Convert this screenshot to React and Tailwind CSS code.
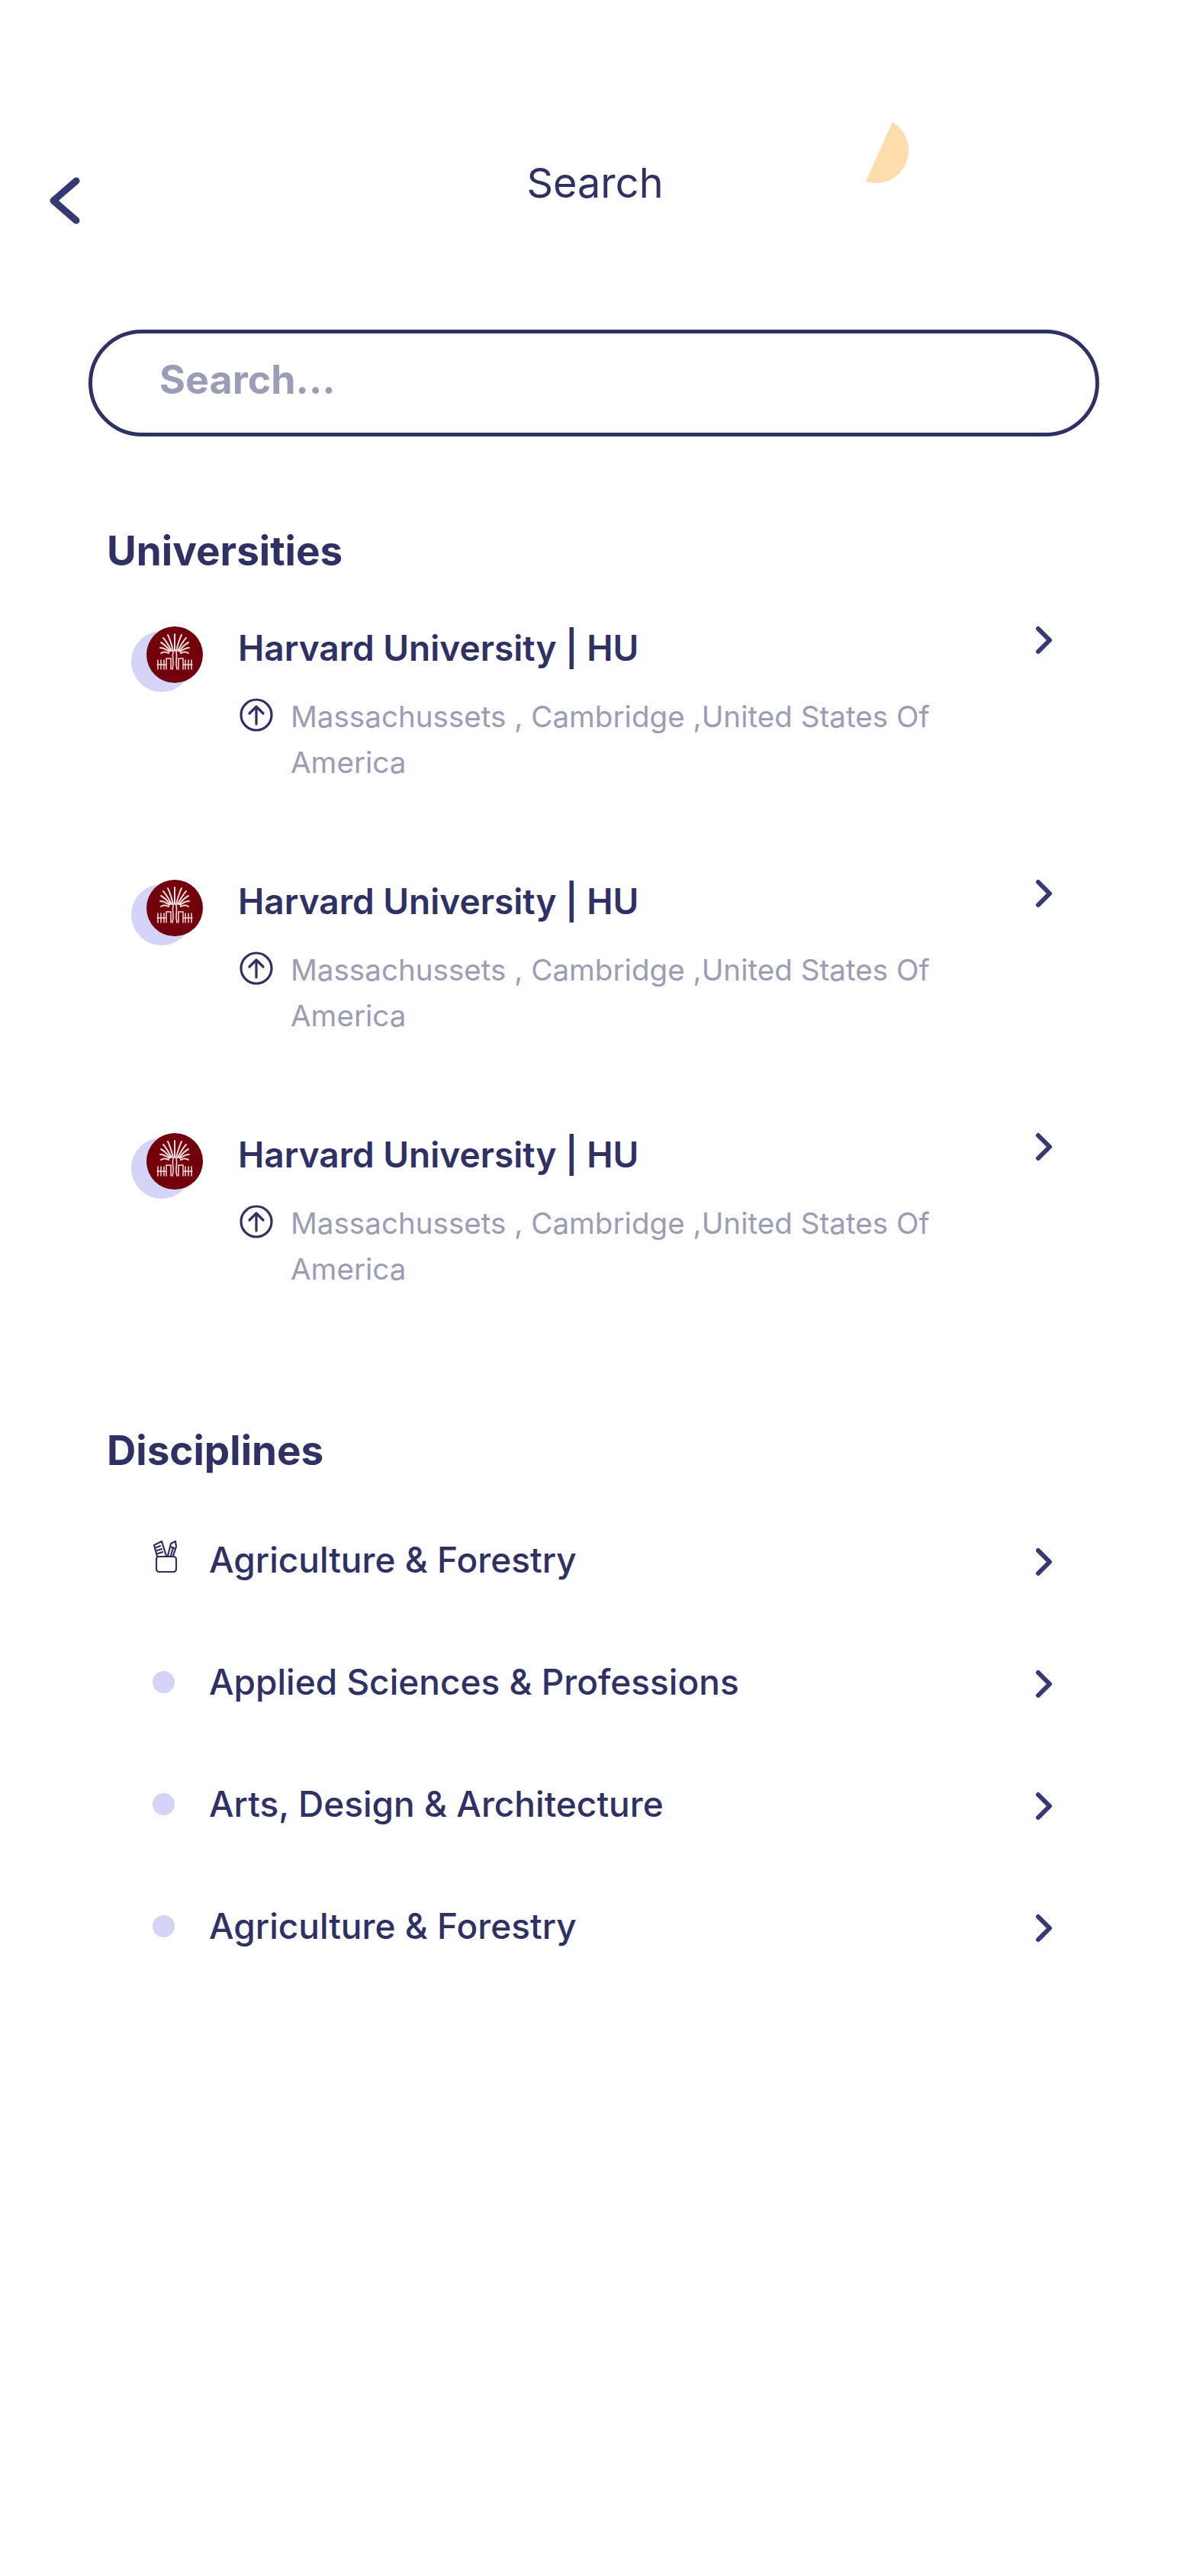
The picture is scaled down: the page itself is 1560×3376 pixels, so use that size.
const universities = [1, 2, 3];
const disciplines = [
  "Agriculture & Forestry",
  "Applied Sciences & Professions",
  "Arts, Design & Architecture",
  "Agriculture & Forestry",
];

const Chevron = ({ className }) => (
  <svg className={className} viewBox="0 0 28 38" fill="none" stroke="#363a72" strokeWidth="6" strokeLinecap="round" strokeLinejoin="round">
    <path d="M5 4l15 15L5 34" />
  </svg>
);

const Logo = () => (
  <div className="relative h-[88px] w-[100px] shrink-0">
    <div className="absolute left-0 top-[6px] h-20 w-20 rounded-full bg-[#d3d4f8]" />
    <svg className="absolute left-[20px] top-0 h-[74px] w-[74px]" viewBox="0 0 74 74">
      <circle cx="37" cy="37" r="37" fill="#71000c" />
      <g fill="none" stroke="#f0dcd8" strokeWidth="2" strokeLinecap="round">
        <path d="M37 32C37 24 37 16 37 10M35 32C33 24 31 17 28 11M39 32C41 24 43 17 46 11M33 32C29 25 26 19 22 15M41 32C45 25 48 19 52 15M31 32C27 27 23 23 19 21M43 32C47 27 51 23 55 21M30 33C26 30 22 28 18 28M44 33C48 30 52 28 56 28M29 35C25 33 22 33 19 35M45 35C49 33 52 33 55 35" />
        <path d="M35 33C33 42 37 46 34 56M39 33C41 42 37 46 40 56" strokeWidth="1.6" />
        <path d="M14 50H26M48 50H60M15 44V56M19 44V56M23 44V56M51 44V56M55 44V56M59 44V56M26 56V42H32V56M42 56V42H48V56" strokeWidth="1.5" />
      </g>
    </svg>
  </div>
);

const PinIcon = () => (
  <svg className="ml-[2px] mt-[6px] h-[44px] w-[44px] shrink-0" viewBox="0 0 44 44" fill="none" stroke="#2f3164" strokeWidth="3.2" strokeLinecap="round" strokeLinejoin="round">
    <circle cx="22" cy="22" r="20" />
    <path d="M22 34V11M13 20l9-9 9 9" />
  </svg>
);

const PencilCup = () => (
  <svg className="-ml-[5px] -mt-[8px] h-[50px] w-[44px]" viewBox="0 0 44 50" fill="none" stroke="#2f3164" strokeWidth="2.2" strokeLinecap="round" strokeLinejoin="round">
    <rect x="10" y="25" width="26" height="20" rx="3.5" />
    <path d="M11 25L7 10l10-5 6 19M10 13l5-2M11 17l6-2M12 21l6-2M25 24l4-16 6-3 1 7-4 12M28 12l5 2M29 24l3-11" />
  </svg>
);

const UniversityRow = () => (
  <div className="flex h-[332px] items-start pl-[172px] pr-[176px]">
    <Logo />
    <div className="-mt-[2px] ml-[40px] flex-1">
      <h3 className="text-[46px] font-semibold leading-[60px] text-[#2f3164]">Harvard University | HU</h3>
      <div className="mt-[30px] flex items-start">
        <PinIcon />
        <p className="ml-[23px] w-[900px] text-[38.6px] leading-[60px] text-[#9b9db5]">
          Massachussets , Cambridge ,United States Of America
        </p>
      </div>
    </div>
    <Chevron className="-mt-[1px] h-[38px] w-[28px] shrink-0" />
  </div>
);

const DisciplineRow = ({ name, first }) => (
  <div className="flex h-[160px] items-center pl-[200px] pr-[176px]">
    <div className="flex w-[74px] shrink-0 items-center">
      {first ? <PencilCup /> : <span className="h-[29px] w-[29px] rounded-full bg-[#d3d4f8]" />}
    </div>
    <span className="flex-1 text-[46px] font-medium text-[#2f3164]">{name}</span>
    <Chevron className="mt-[6px] h-[38px] w-[28px] shrink-0" />
  </div>
);

export default function App() {
  return (
    <div className="relative min-h-[3376px] w-[1560px] bg-white font-['Inter',sans-serif]">
      <svg className="absolute left-[1103px] top-[140px] h-[120px] w-[120px]" viewBox="0 0 120 120">
        <path d="M67 20A43 43 0 0 1 32 98Z" fill="#fedcab" />
      </svg>

      <header className="grid h-[300px] grid-cols-[1fr_auto_1fr] items-start pl-[62px] pt-[232px]">
        <svg className="h-[62px] w-[46px] shrink-0" viewBox="0 0 46 62" fill="none" stroke="#363a72" strokeWidth="9" strokeLinecap="round" strokeLinejoin="round">
          <path d="M38 5L8 31l30 26" />
        </svg>
        <h1 className="-mt-[27px] -ml-[62px] text-[54px] leading-[70px] text-[#2f3164]">Search</h1>
      </header>

      <div className="ml-[116px] mr-[119px] mt-[132px] flex h-[140px] items-center rounded-full border-[5px] border-[#2f3164] pl-[88px]">
        <span className="-mt-[8px] text-[52px] font-bold text-[#9b9db5]">Search...</span>
      </div>

      <h2 className="ml-[140px] mt-[115px] text-[53px] font-bold leading-[70px] text-[#2f3164]">Universities</h2>
      <div className="mt-[64px]">
        {universities.map((u) => (
          <UniversityRow key={u} />
        ))}
      </div>

      <h2 className="ml-[140px] mt-[49px] text-[53px] font-bold leading-[70px] text-[#2f3164]">Disciplines</h2>
      <div className="mt-[28px]">
        {disciplines.map((name, i) => (
          <DisciplineRow key={i} name={name} first={i === 0} />
        ))}
      </div>
    </div>
  );
}
